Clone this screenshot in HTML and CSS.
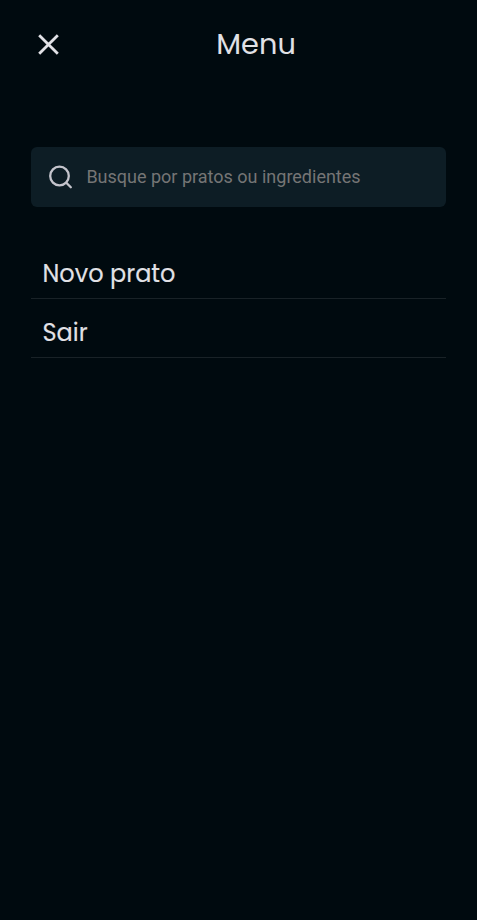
FILE: index.html
```html
<!DOCTYPE html>
<html lang="pt-BR">
<head>
<meta charset="utf-8">
<title>Menu</title>
<link rel="stylesheet" href="styles.css">
</head>
<body>
<header class="header">
  <button class="close" aria-label="Fechar"><svg viewBox="0 0 21 21" width="21" height="21"><path d="M1.2 1.2 19.8 19.8M19.8 1.2 1.2 19.8"/></svg></button>
  <h1 class="title">Menu</h1>
</header>
<main class="content">
  <label class="search">
    <svg class="search-icon" viewBox="0 0 24 24" width="24" height="24"><circle cx="10.5" cy="11" r="9.3"/><path d="m17.3 17.8 4.5 4.5"/></svg>
    <input type="text" placeholder="Busque por pratos ou ingredientes">
  </label>
  <nav class="nav">
    <a class="item">Novo prato</a>
    <a class="item">Sair</a>
  </nav>
</main>
</body>
</html>
```
FILE: styles.css
```css
* { box-sizing: border-box; }
body {
  margin: 0;
  min-height: 100vh;
  background: #000a0f;
  color: #e1e1e6;
  font-family: Poppins, Inter, "Liberation Sans", sans-serif;
}
.header {
  display: flex;
  align-items: center;
  height: 88px;
  padding-left: 38px;
}
.close {
  display: flex;
  padding: 0;
  border: 0;
  background: none;
}
svg { fill: none; stroke: #e1e1e6; stroke-width: 2.8; flex: none; }
.title {
  margin: 0 0 0 157.3px;
  font-size: 28.8px;
  font-weight: 400;
  line-height: 40px;
}
.content { padding: 59px 31px 0; }
.search {
  display: flex;
  align-items: center;
  gap: 13.4px;
  height: 60px;
  padding-left: 18px;
  border-radius: 6px;
  background: #0d1d25;
}
.search-icon { stroke: #c4c4cc; stroke-width: 2.3; stroke-linecap: round; }
.search input {
  flex: 1;
  min-width: 0;
  padding: 0;
  border: 0;
  outline: 0;
  background: transparent;
  color: #c4c4cc;
  font: 18px/24px Roboto, sans-serif;
}
.search input::placeholder { color: #757575; }
.nav { margin-top: 33px; }
.item {
  display: flex;
  align-items: center;
  height: 59px;
  padding: 9px 0 0 11.5px;
  border-bottom: 1px solid #192227;
  font-size: 24px;
  font-weight: 400;
  line-height: 36px;
  -webkit-text-stroke: 0.1px currentColor;
}
```
